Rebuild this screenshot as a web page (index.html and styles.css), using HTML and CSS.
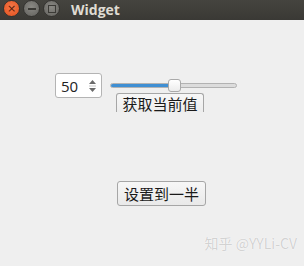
FILE: index.html
```html
<!DOCTYPE html>
<html lang="zh">
<head>
    <meta charset="UTF-8">
    <title>Widget</title>
    <link rel="stylesheet" href="styles.css">
</head>
<body>
    <div class="window">
        <!-- Title bar -->
        <div class="titlebar">
            <div class="controls">
                <span class="ctl close">&times;</span>
                <span class="ctl min"><i class="bar"></i></span>
                <span class="ctl max"><i class="square"></i></span>
            </div>
            <span class="title">Widget</span>
        </div>

        <div class="content">
            <div class="row">
                <div class="spinbox">
                    <span class="value">50</span>
                    <svg class="arrows" width="9" height="16" viewBox="0 0 9 16">
                        <path d="M1 6 L4.5 2 L8 6 Z" fill="#6a6a6a"/>
                        <line x1="1" y1="8" x2="8" y2="8" stroke="#c8c8c8" stroke-width="1"/>
                        <path d="M1 10 L4.5 14 L8 10 Z" fill="#6a6a6a"/>
                    </svg>
                </div>
                <div class="slider">
                    <div class="groove">
                        <div class="fill"></div>
                    </div>
                    <div class="handle"></div>
                </div>
            </div>

            <div class="get-row">
                <button class="btn">获取当前值</button>
            </div>

            <div class="half-row">
                <button class="btn">设置到一半</button>
            </div>
        </div>

        <div class="watermark">知乎 @YYLi-CV</div>
    </div>
</body>
</html>
```

FILE: styles.css
```css
* {
    margin: 0;
    padding: 0;
    box-sizing: border-box;
}

body {
    width: 304px;
    height: 266px;
    overflow: hidden;
    background: #efefef;
    font-family: "Noto Sans CJK SC", "Open Sans", sans-serif;
}

.window {
    position: relative;
    height: 100%;
}

.titlebar {
    height: 20px;
    background: linear-gradient(#45443f, #3a3935);
    display: flex;
    align-items: center;
}

.controls {
    display: flex;
    gap: 3px;
    padding-left: 3px;
    margin-top: -3px;
}

.ctl {
    width: 17px;
    height: 17px;
    border-radius: 50%;
    display: flex;
    align-items: center;
    justify-content: center;
    background: radial-gradient(circle at 50% 40%, #8a8984, #62615d);
    border: 1px solid #343330;
}

.ctl.close {
    background: radial-gradient(circle at 50% 40%, #f5784a, #e2511d);
    color: #5a1c08;
    font-family: "DejaVu Sans", sans-serif;
    font-size: 11px;
    line-height: 1;
}

.ctl .bar {
    width: 8px;
    height: 2px;
    background: #3b3a36;
}

.ctl .square {
    width: 8px;
    height: 8px;
    border: 1px solid #3b3a36;
}

.title {
    margin-left: 11px;
    margin-top: -2px;
    color: #dfdbd2;
    font-family: "Open Sans", sans-serif;
    font-weight: 700;
    font-size: 14px;
}

.content {
    padding-top: 53px;
}

.row {
    display: flex;
    align-items: center;
    height: 25px;
    padding-left: 55px;
}

.spinbox {
    width: 47px;
    height: 25px;
    background: #fff;
    border: 1px solid #b4b4b4;
    border-radius: 3px;
    display: flex;
    align-items: center;
    justify-content: space-between;
    padding: 0 4px 0 5px;
}

.spinbox .value {
    font-family: "Open Sans", sans-serif;
    font-size: 15px;
    color: #222;
}

.slider {
    position: relative;
    width: 127px;
    height: 13px;
    margin-left: 8px;
    display: flex;
    align-items: center;
}

.groove {
    width: 100%;
    height: 5px;
    border: 1px solid #b2b2b2;
    border-radius: 3px;
    background: #dcdcdc;
    overflow: hidden;
}

.groove .fill {
    width: 60px;
    height: 100%;
    background: #3f8fd3;
}

.handle {
    position: absolute;
    left: 58px;
    top: 0;
    width: 13px;
    height: 13px;
    background: linear-gradient(#ffffff, #ececec);
    border: 1px solid #a9a9a9;
    border-radius: 3px;
}

.btn {
    height: 25px;
    padding: 0;
    white-space: nowrap;
    background: linear-gradient(#f7f7f7, #e9e9e9);
    border: 1px solid #a6a6a6;
    border-radius: 3px;
    font-family: "Noto Sans CJK SC", sans-serif;
    font-size: 15px;
    color: #1a1a1a;
    line-height: 23px;
}

.get-row {
    display: flex;
    margin-top: -5px;
    padding-left: 116px;
}

/* the first button is squeezed, its lower edge is not drawn */
.get-row .btn {
    width: 88px;
    height: 19px;
    line-height: 15px;
    border-bottom: none;
    border-radius: 3px 3px 0 0;
    background: linear-gradient(#f7f7f7, #ededed);
}

.half-row {
    display: flex;
    margin-top: 69px;
    padding-left: 117px;
}

.half-row .btn {
    width: 89px;
}

.watermark {
    position: absolute;
    right: 7px;
    bottom: 13px;
    font-family: "Noto Sans CJK SC", sans-serif;
    font-size: 14px;
    color: #d2d2d2;
    text-shadow: 0 0 1px #fff, 0 0 1px #fff;
}
```
